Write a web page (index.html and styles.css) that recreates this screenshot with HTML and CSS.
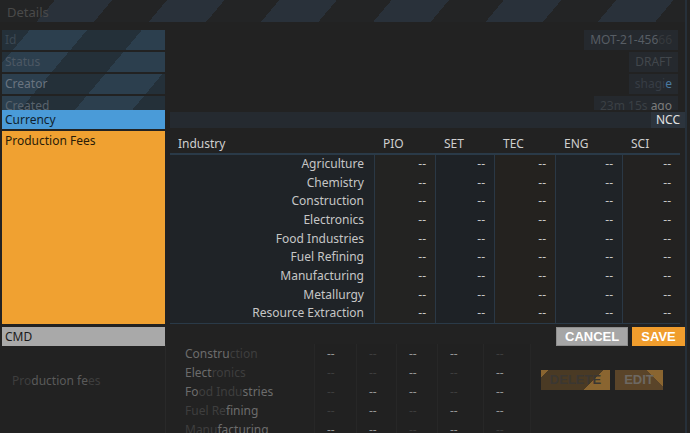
FILE: index.html
```html
<!DOCTYPE html>
<html>
<head>
<meta charset="utf-8">
<link rel="stylesheet" href="styles.css">
</head>
<body>
<div class="app">
  <div class="titlebar">Details</div>
  <div class="rows">
    <div class="row">
      <div class="lbl faded l-id">Id</div>
      <div class="val"><span class="vbox v-mot">MOT-21-456<i>66</i></span></div>
    </div>
    <div class="row">
      <div class="lbl faded l-status">Status</div>
      <div class="val"><span class="vbox v-draft">DRAFT</span></div>
    </div>
    <div class="row">
      <div class="lbl faded l-creator">Creator</div>
      <div class="val"><span class="vbox v-user">shagi<b>e</b></span></div>
    </div>
    <div class="row row-cut">
      <div class="lbl faded l-created">Created</div>
      <div class="val"><span class="vbox v-time">23m 15s <b>ago</b></span></div>
    </div>
    <div class="row row-currency">
      <div class="lbl blue">Currency</div>
      <div class="val val-currency"><span class="ncc">NCC</span></div>
    </div>
    <div class="row row-fees">
      <div class="lbl orange">Production Fees</div>
      <div class="val val-table">
        <div class="fees">
          <div class="th c-ind">Industry</div>
          <div class="th">PIO</div>
          <div class="th">SET</div>
          <div class="th">TEC</div>
          <div class="th">ENG</div>
          <div class="th">SCI</div>

          <div class="td c-ind">Agriculture</div><div class="td c1">--</div><div class="td c2">--</div><div class="td c3">--</div><div class="td c4">--</div><div class="td c5">--</div>
          <div class="td c-ind">Chemistry</div><div class="td c1">--</div><div class="td c2">--</div><div class="td c3">--</div><div class="td c4">--</div><div class="td c5">--</div>
          <div class="td c-ind">Construction</div><div class="td c1">--</div><div class="td c2">--</div><div class="td c3">--</div><div class="td c4">--</div><div class="td c5">--</div>
          <div class="td c-ind">Electronics</div><div class="td c1">--</div><div class="td c2">--</div><div class="td c3">--</div><div class="td c4">--</div><div class="td c5">--</div>
          <div class="td c-ind">Food Industries</div><div class="td c1">--</div><div class="td c2">--</div><div class="td c3">--</div><div class="td c4">--</div><div class="td c5">--</div>
          <div class="td c-ind">Fuel Refining</div><div class="td c1">--</div><div class="td c2">--</div><div class="td c3">--</div><div class="td c4">--</div><div class="td c5">--</div>
          <div class="td c-ind">Manufacturing</div><div class="td c1">--</div><div class="td c2">--</div><div class="td c3">--</div><div class="td c4">--</div><div class="td c5">--</div>
          <div class="td c-ind">Metallurgy</div><div class="td c1">--</div><div class="td c2">--</div><div class="td c3">--</div><div class="td c4">--</div><div class="td c5">--</div>
          <div class="td c-ind">Resource Extraction</div><div class="td c1">--</div><div class="td c2">--</div><div class="td c3">--</div><div class="td c4">--</div><div class="td c5">--</div>
        </div>
      </div>
    </div>
    <div class="row row-cmd">
      <div class="lbl gray">CMD</div>
      <div class="val btns">
        <button class="btn cancel">CANCEL</button>
        <button class="btn save">SAVE</button>
      </div>
    </div>
  </div>

  <div class="ghost">
    <div class="g-left"><span class="dim">Pro</span>duction fe<span class="dim">es</span></div>
    <div class="g-table">
      <div class="gn">Constru<span class="dim">ction</span></div><div class="gd">--</div><div class="gd dim">--</div><div class="gd">--</div><div class="gd">--</div><div class="gd dim">--</div>
      <div class="gn">Elect<span class="dim">ronics</span></div><div class="gd dim">--</div><div class="gd dim">--</div><div class="gd">--</div><div class="gd dim">--</div><div class="gd">--</div>
      <div class="gn">Fo<span class="dim">od Indu</span>stries</div><div class="gd dim">--</div><div class="gd">--</div><div class="gd">--</div><div class="gd dim">--</div><div class="gd">--</div>
      <div class="gn"><span class="dim">Fuel Re</span>fining</div><div class="gd dim">--</div><div class="gd">--</div><div class="gd dim">--</div><div class="gd">--</div><div class="gd">--</div>
      <div class="gn"><span class="dim">Manu</span>facturing</div><div class="gd">--</div><div class="gd">--</div><div class="gd dim">--</div><div class="gd">--</div><div class="gd dim">--</div>
    </div>
    <div class="g-actions">
      <span class="gbtn gdelete">DELETE</span>
      <span class="gbtn gedit">EDIT</span>
    </div>
  </div>
</div>
</body>
</html>
```

FILE: styles.css
```css
html, body {
  margin: 0;
  padding: 0;
}

body {
  width: 690px;
  height: 433px;
  overflow: hidden;
  background: #222222;
  font-family: "Noto Sans", "Open Sans", sans-serif;
  font-size: 12px;
}

.app {
  width: 687px;
  height: 433px;
  box-sizing: border-box;
  border-right: 2px solid #26303a;
  overflow: hidden;
}

.titlebar {
  height: 22px;
  line-height: 25px;
  padding-left: 7px;
  margin-bottom: 8px;
  font-size: 13px;
  color: #4a4a4a;
  background: repeating-linear-gradient(130deg, #232425 0 42px, #29313a 42px 86px);
  background-attachment: fixed;
}

.rows {
  display: flex;
  flex-direction: column;
}

.row {
  display: grid;
  grid-template-columns: 163px 1fr;
  column-gap: 5px;
  padding-left: 2px;
  height: 20px;
  margin-bottom: 2px;
}

.row-cut {
  height: 14px;
  margin-bottom: 0;
  overflow: hidden;
}

.row-currency {
  height: 19px;
}

.row-fees {
  height: 193px;
  margin-bottom: 3px;
}

.row-cmd {
  height: 19px;
  margin-bottom: 0;
}

.lbl {
  padding-left: 3px;
  line-height: 20px;
  white-space: nowrap;
  overflow: hidden;
}

.faded {
  background: repeating-linear-gradient(130deg, #243039 0 42px, #2c3f4e 42px 86px);
  background-attachment: fixed;
}

.l-id { color: #3c4853; }
.l-status { color: #4c5864; }
.l-creator { color: #6a7480; }
.l-created { color: #59636d; }

.blue {
  background: #4a9bd8;
  color: #0f1f2e;
  line-height: 19px;
}

.orange {
  background: #f0a131;
  color: #2a1c08;
  line-height: 20px;
}

.gray {
  background: #a9a9a9;
  color: #1b1b1b;
  line-height: 19px;
}

.val {
  display: flex;
  justify-content: flex-end;
  padding-right: 7px;
  min-width: 0;
}

.vbox {
  padding: 0 6px;
  line-height: 20px;
  background: #25292e;
  white-space: nowrap;
}

.vbox i, .vbox b {
  font-style: normal;
  font-weight: normal;
}

.v-mot { color: #575d64; }
.v-mot i { color: #36393d; }
.v-draft { color: #42474c; }
.v-user { color: #373d45; }
.v-user b { color: #4a7aa2; }
.v-time { color: #3b4045; }
.v-time b { color: #7c7c7c; }

.val-currency {
  background: #252a30;
  padding-right: 0;
  margin-top: 2px;
  height: 16px;
}

.ncc {
  background: #2c343d;
  color: #e2e2e2;
  padding: 0 5px;
  line-height: 16px;
}

.val-table {
  padding-right: 5px;
  justify-content: flex-start;
  align-items: flex-start;
}

.fees {
  margin-top: 3px;
  width: 510px;
  display: grid;
  grid-template-columns: 204px 61px 59px 61px 67px 58px;
  grid-template-rows: 21px repeat(9, 18.67px);
  border-bottom: 1px solid #2a3a48;
  color: #cacaca;
}

.th {
  border-bottom: 2px solid #2a3a48;
  padding-left: 9px;
  line-height: 19px;
  color: #cfcfcf;
}

.th.c-ind {
  padding-left: 8px;
}

.td {
  text-align: right;
  padding-right: 9px;
  line-height: 18.67px;
  border-left: 1px solid #2a3845;
  color: #c6c6c6;
}

.td.c-ind {
  border-left: none;
  padding-right: 10px;
  background: #1f2327;
}

.c1 { background: #232322; }
.c2 { background: #1e2226; }
.c3 { background: #24221f; }
.c4 { background: #1f2327; }
.c5 { background: #232221; }

.btns {
  padding-right: 0;
  gap: 4px;
  align-items: stretch;
}

.btn {
  font-family: "Liberation Sans", Arial, sans-serif;
  font-weight: bold;
  font-size: 13px;
  color: #ffffff;
  border: 1px solid transparent;
  padding: 0 8px;
  margin: 0;
  height: 19px;
  line-height: 17px;
}

.cancel {
  width: 72px;
  background: #a6a6a6;
  border-color: #8e8e8e;
}

.save {
  width: 53px;
  background: #f09d2d;
  border-color: #f09d2d;
}

.ghost {
  display: flex;
  margin-top: -2px;
  height: 90px;
}

.g-left {
  width: 166px;
  box-sizing: border-box;
  border-right: 1px solid #292929;
  padding-left: 12px;
  padding-top: 27px;
  line-height: 19px;
  color: #5a5a5a;
  font-size: 12px;
  white-space: nowrap;
}

.dim {
  color: #3e3e3e;
}

.g-table {
  margin-left: 3px;
  display: grid;
  grid-template-columns: 145px 42px 40px 41px 46px 47px;
  grid-auto-rows: 19px;
  align-self: flex-start;
  border-right: 1px solid #262626;
}

.gn {
  padding-left: 16px;
  line-height: 19px;
  color: #6c6c6c;
  white-space: nowrap;
  font-size: 12px;
}

.gd {
  padding-left: 12px;
  line-height: 19px;
  color: #959595;
  border-left: 1px solid #272727;
  background: #212121;
}

.gd.dim {
  color: #3d3d3d;
}

.g-actions {
  display: flex;
  gap: 5px;
  padding-left: 10px;
  padding-top: 26px;
  align-self: flex-start;
}

.gbtn {
  display: block;
  height: 20px;
  line-height: 20px;
  font-family: "Liberation Sans", Arial, sans-serif;
  font-weight: bold;
  font-size: 13px;
  text-align: center;
}

.gdelete {
  width: 69px;
  color: #3b3732;
  background:
    linear-gradient(135deg, #8a6530 0 5px, transparent 5px),
    linear-gradient(135deg, transparent 0 70%, #8a6530 70%),
    #4a3a24;
}

.gedit {
  width: 48px;
  color: #6d6862;
  background:
    linear-gradient(225deg, #8a6530 0 12px, transparent 12px),
    #5a4429;
}
```
